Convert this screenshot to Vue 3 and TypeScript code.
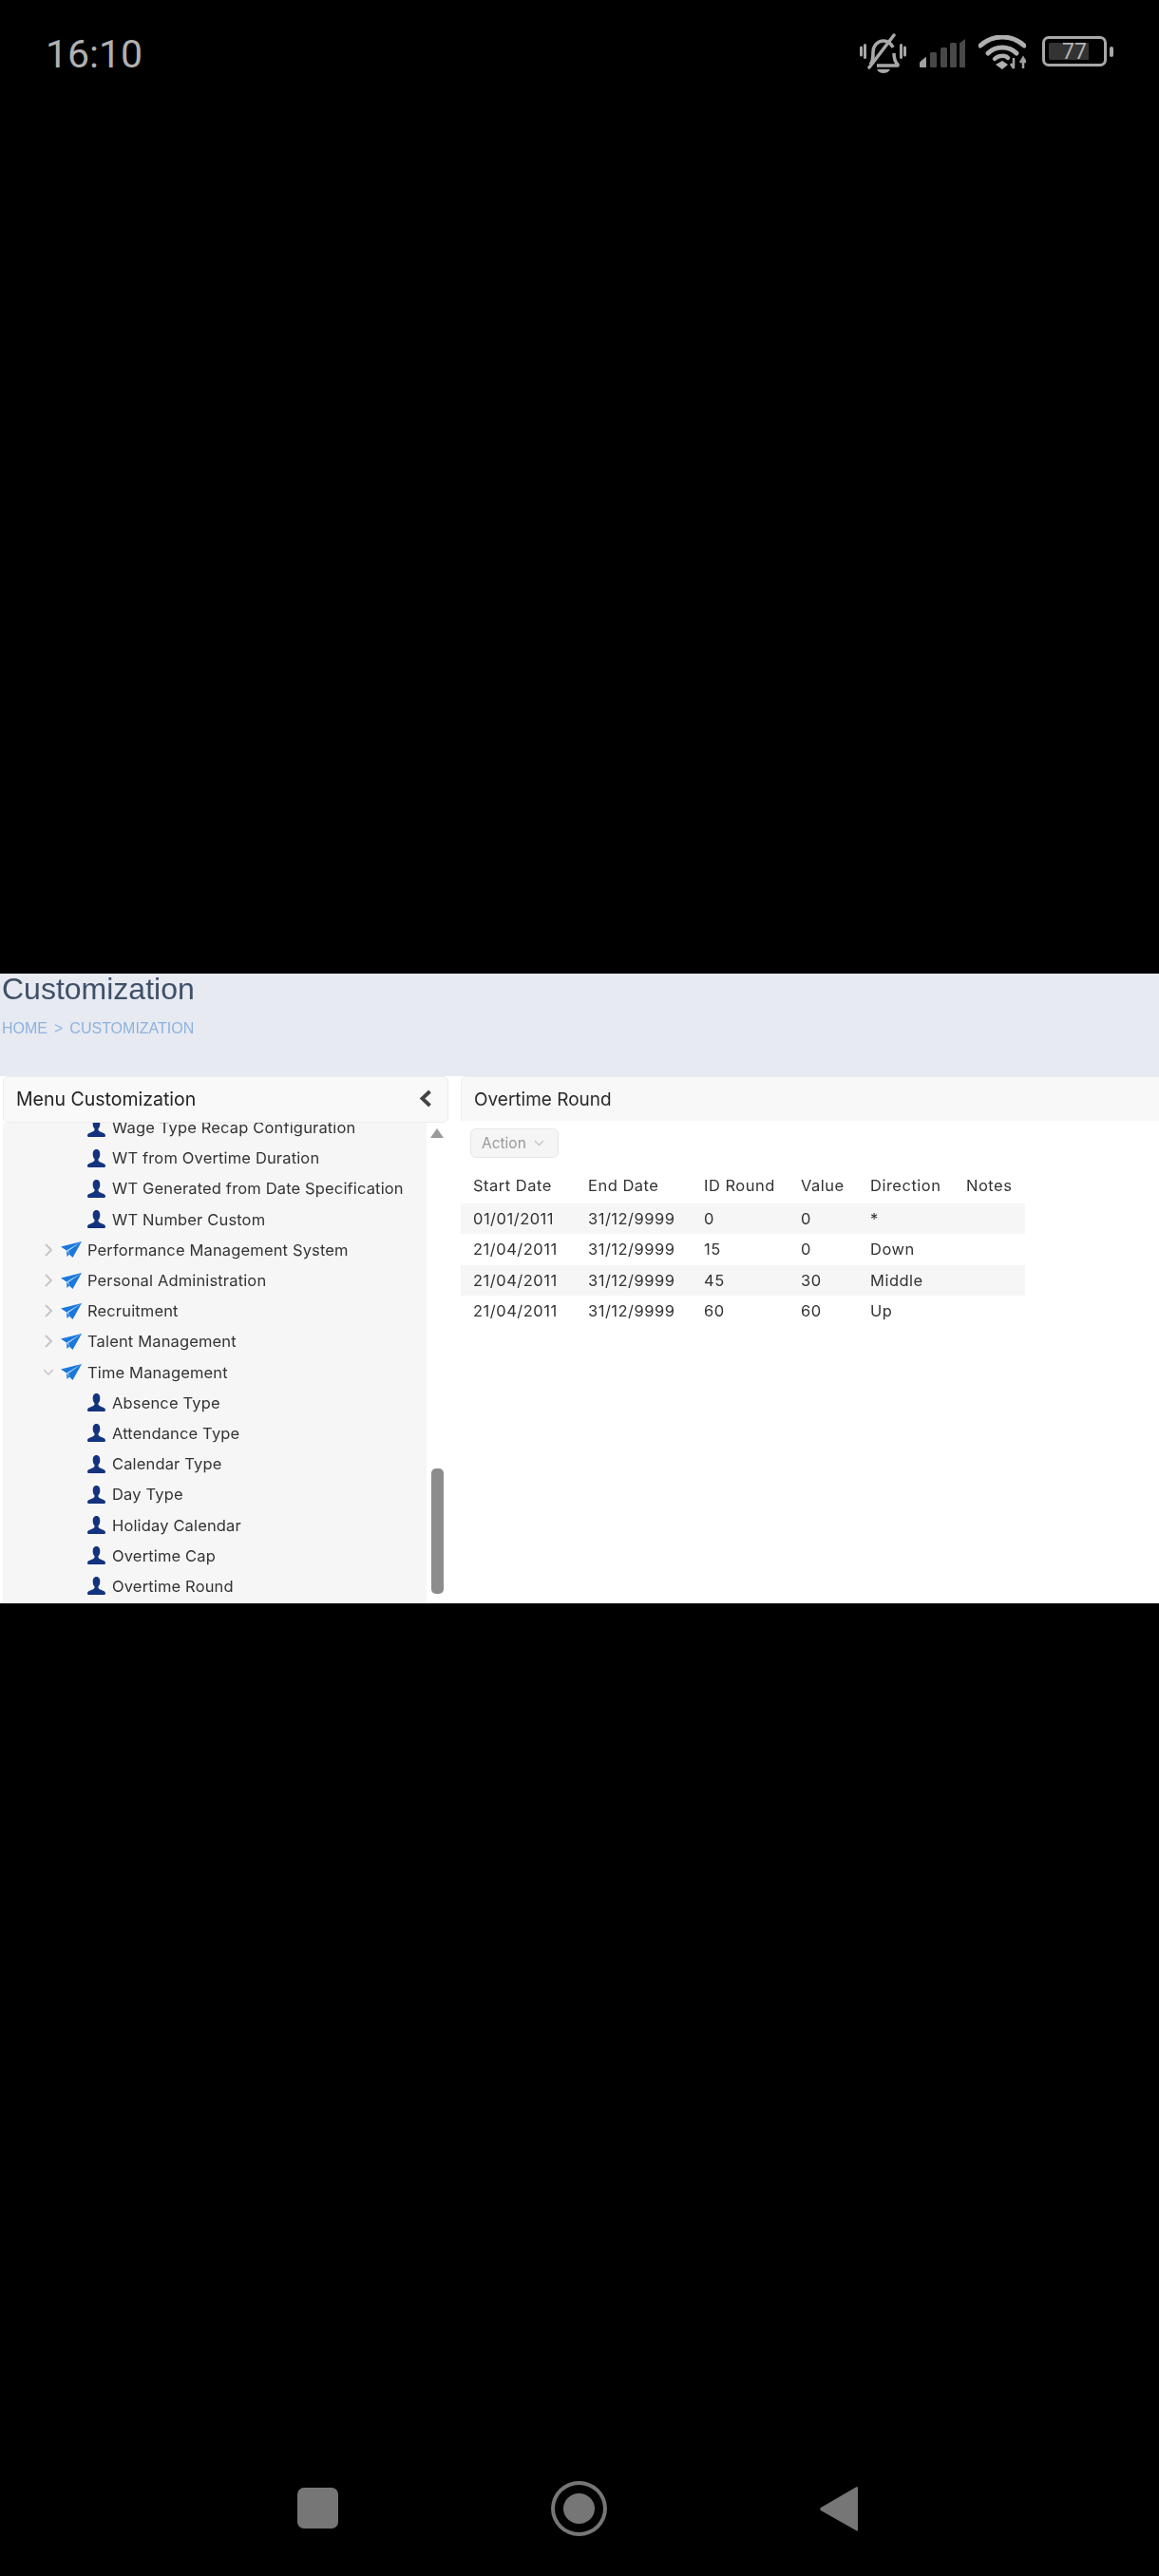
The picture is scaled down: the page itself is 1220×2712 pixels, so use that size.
<template>
  <div class="phone">
    <!-- status bar -->
    <div class="status-bar">
      <span class="time">16:10</span>
      <div class="status-icons">
        <svg class="ic-bell" width="49" height="42" viewBox="0 0 49 42">
          <path d="M1.500 15v8M5.500 12.500v13M47.500 15v8M43.500 12.500v13" stroke="#a8a8a8" stroke-width="3" stroke-linecap="round" fill="none" />
          <path d="M11 33c3-3 3-7 3-13 0-7 5-12 11-12 5 0 8 3 10 7M36 21c0 5 1 9 4 12v1H18" stroke="#a8a8a8" stroke-width="3.500" fill="none" stroke-linejoin="round" />
          <path d="M10 36L36 2" stroke="#a8a8a8" stroke-width="3.500" stroke-linecap="round" />
          <path d="M18 38h14c-2 3-4 4-7 4s-5-1-7-4z" fill="#a8a8a8" />
        </svg>
        <svg class="ic-signal" width="49" height="32" viewBox="0 0 49 32">
          <path d="M0 26c0-1 6-6 7-6v11H1c-1 0-1-1-1-1z" fill="#a0a0a0" />
          <rect x="11" y="15" width="7" height="16" rx="1.500" fill="#484848" />
          <rect x="22" y="10" width="7" height="21" rx="1.500" fill="#484848" />
          <rect x="32" y="5" width="7" height="26" rx="1.500" fill="#484848" />
          <path d="M42 5.500L48 1v29c0 1-1 1-1 1h-4c-1 0-1-1-1-1z" fill="#484848" />
        </svg>
        <svg class="ic-wifi" width="50" height="36" viewBox="0 0 50 36">
          <path d="M2 11C15 -1 35 -1 48 11" stroke="#b0b0b0" stroke-width="5" fill="none" stroke-linecap="round" />
          <path d="M10 19C18 11 32 11 40 19" stroke="#b0b0b0" stroke-width="5" fill="none" stroke-linecap="round" />
          <path d="M17 25C21 21 28 21 31 24" stroke="#b0b0b0" stroke-width="4.500" fill="none" stroke-linecap="round" />
          <path d="M18 31l7-4 6 4-6 5z" fill="#b0b0b0" />
          <path d="M37 24v11M34 30l3 5M47 35V24M44 29l3-5 3 5" stroke="#a0a0a0" stroke-width="2.500" fill="none" />
        </svg>
        <div class="battery">
          <div class="battery-body">
            <div class="battery-fill"><span>77</span></div>
          </div>
          <div class="battery-nub"></div>
        </div>
      </div>
    </div>

    <!-- browser content -->
    <div class="web">
      <div class="page-head">
        <h1>Customization</h1>
        <div class="crumb">HOME<span class="sep">&gt;</span>CUSTOMIZATION</div>
      </div>
      <div class="body">
        <div class="menu">
          <div class="menu-head">
            <span>Menu Customization</span>
            <svg width="14" height="19" viewBox="0 0 14 19"><path d="M11.500 2L3.500 9.500 11.500 17" stroke="#444" stroke-width="3.800" fill="none" /></svg>
          </div>
          <div class="menu-body">
            <div class="tree">
              <div v-for="item in tree" :key="item.label" class="node" :class="item.kind">
                <template v-if="item.kind === 'leaf'">
                  <svg class="user" width="19" height="19" viewBox="0 0 20 20"><path d="M10 0c3 0 4 2.500 4 5.500 0 2.500-1 4.500-2 5.500 0 2 1 2.500 3 3.500s5 1.500 5 4c0 1-.5 1.500-1 1.500H1c-.5 0-1-.5-1-1.500 0-2.500 3-3 5-4s3-1.500 3-3.500c-1-1-2-3-2-5.500C6 2.500 7 0 10 0z" fill="#14337f" /></svg>
                </template>
                <template v-else>
                  <svg class="caret" width="10" height="14" viewBox="0 0 10 14">
                    <path v-if="item.open" d="M0 4l5 5 5-5" stroke="#c4c4c4" stroke-width="1.500" fill="none" />
                    <path v-else d="M2 1l6 6-6 6" stroke="#c4c4c4" stroke-width="1.800" fill="none" />
                  </svg>
                  <svg class="plane" width="22" height="17" viewBox="0 0 22 17"><path d="M0 5.500L22 0 12.500 17 9 13.500 6.500 16 6 9.500z" fill="#1a78dc" /><path d="M22 0L6 9.500 9 13.500 8 10z" fill="#bcdcf7" /></svg>
                </template>
                <span>{{ item.label }}</span>
              </div>
            </div>
          </div>
          <div class="scroll">
            <i class="scroll-up"></i>
            <i class="scroll-thumb"></i>
          </div>
        </div>

        <div class="detail">
          <div class="detail-head">Overtime Round</div>
          <button class="action">Action
            <svg width="11" height="7" viewBox="0 0 11 7"><path d="M1 1l4.500 4.500L10 1" stroke="#c0c0c0" stroke-width="1.200" fill="none" /></svg>
          </button>
          <table>
            <thead>
              <tr><th v-for="c in columns" :key="c">{{ c }}</th></tr>
            </thead>
            <tbody>
              <tr v-for="(r, i) in rows" :key="i">
                <td v-for="(v, j) in r" :key="j">{{ v }}</td>
              </tr>
            </tbody>
          </table>
        </div>
      </div>
    </div>

    <!-- nav bar -->
    <div class="nav">
      <div class="nav-square"></div>
      <div class="nav-home"><div></div></div>
      <svg width="40" height="48" viewBox="0 0 40 48"><path d="M38 1.500c1 -1 2 -.5 2 1V46c0 1.500-1 2-2 1L1 26c-1-1-1-2 0-3z" fill="#767676" /></svg>
    </div>
  </div>
</template>

<script setup lang="ts">
type TreeItem = { label: string; kind: 'leaf' | 'group'; open?: boolean }

const leaf = (label: string): TreeItem => ({ label, kind: 'leaf' })
const group = (label: string, open = false): TreeItem => ({ label, kind: 'group', open })

const tree: TreeItem[] = [
  leaf('Wage Type Recap Configuration'),
  leaf('WT from Overtime Duration'),
  leaf('WT Generated from Date Specification'),
  leaf('WT Number Custom'),
  group('Performance Management System'),
  group('Personal Administration'),
  group('Recruitment'),
  group('Talent Management'),
  group('Time Management', true),
  leaf('Absence Type'),
  leaf('Attendance Type'),
  leaf('Calendar Type'),
  leaf('Day Type'),
  leaf('Holiday Calendar'),
  leaf('Overtime Cap'),
  leaf('Overtime Round'),
]

const columns = ['Start Date', 'End Date', 'ID Round', 'Value', 'Direction', 'Notes']

const rows = [
  ['01/01/2011', '31/12/9999', '0', '0', '*', ''],
  ['21/04/2011', '31/12/9999', '15', '0', 'Down', ''],
  ['21/04/2011', '31/12/9999', '45', '30', 'Middle', ''],
  ['21/04/2011', '31/12/9999', '60', '60', 'Up', ''],
]
</script>

<style>
html,
body {
  background: #000;
}
</style>

<style scoped>
.phone {
  width: 1220px;
  height: 2712px;
  background: #000;
  display: flex;
  flex-direction: column;
  overflow: hidden;
}

.status-bar {
  height: 1025px;
  flex-shrink: 0;
  display: flex;
  justify-content: space-between;
  align-items: flex-start;
  padding: 33px 48px 0 48px;
  box-sizing: border-box;
}

.time {
  font-family: Roboto, sans-serif;
  font-size: 41px;
  line-height: 47px;
  margin-top: 1px;
  color: #b0b0b0;
}

.status-icons {
  display: flex;
  align-items: flex-start;
  margin-top: 2px;
}

.ic-signal {
  margin: 5px 0 0 14px;
}

.ic-wifi {
  margin: 2px 0 0 13px;
}

.battery {
  display: flex;
  align-items: center;
  margin: 3px 0 0 17px;
}

.battery-body {
  width: 68px;
  height: 32px;
  box-sizing: border-box;
  border: 3px solid #a8a8a8;
  border-radius: 7px;
  padding: 4px;
}

.battery-fill {
  width: 42px;
  height: 18px;
  background: #333;
  border-radius: 2px 0 0 2px;
  position: relative;
}

.battery-fill span {
  position: absolute;
  left: 14px;
  top: -2px;
  font-family: Roboto, sans-serif;
  font-size: 23px;
  line-height: 23px;
  color: #b4b4b4;
}

.battery-nub {
  width: 4px;
  height: 11px;
  margin-left: 3px;
  background: #a8a8a8;
  border-radius: 2px;
}

.web {
  height: 663px;
  flex-shrink: 0;
  background: #fff;
  overflow: hidden;
  filter: blur(0.4px);
  font-family: Inter, sans-serif;
  font-size: 16.500px;
  color: #333;
}

.page-head {
  height: 108px;
  box-sizing: border-box;
  background: #e8eaf2;
  padding: 0 2px;
  font-family: "Liberation Sans", sans-serif;
}

.page-head h1 {
  margin: 0;
  font-size: 32px;
  font-weight: 400;
  line-height: 32px;
  color: #3f5068;
}

.crumb {
  margin-top: 16px;
  font-size: 16px;
  line-height: 20px;
  color: #8db2de;
}

.sep {
  margin: 0 7px;
}

.body {
  display: flex;
  height: 555px;
}

.menu {
  width: 472px;
  margin-left: 3px;
  flex-shrink: 0;
  position: relative;
  display: flex;
  flex-wrap: wrap;
  align-content: flex-start;
  height: 555px;
  overflow: hidden;
}

.menu-head {
  width: 469px;
  height: 49px;
  box-sizing: border-box;
  padding: 0 16px 2px 13px;
  display: flex;
  align-items: center;
  justify-content: space-between;
  background: #f9f9f9;
  border: 1px solid #ececec;
  border-radius: 6px;
  font-size: 19.500px;
  color: #222;
  position: relative;
  z-index: 1;
}

.menu-body {
  width: 446px;
  height: 506px;
  background: #f6f6f6;
  overflow: hidden;
}

.tree {
  margin-top: -11px;
  letter-spacing: 0.150px;
}

.node {
  height: 32.200px;
  display: flex;
  align-items: center;
  white-space: nowrap;
}

.node.leaf {
  padding-left: 89px;
}

.node.group {
  padding-left: 43px;
}

.user {
  margin-right: 7px;
}

.caret {
  margin-right: 8px;
}

.plane {
  margin-right: 6px;
}

.scroll {
  width: 23px;
  height: 506px;
  position: relative;
}

.scroll-up {
  position: absolute;
  left: 4px;
  top: 6px;
  border-left: 7.500px solid transparent;
  border-right: 7.500px solid transparent;
  border-bottom: 10px solid #9a9a9a;
}

.scroll-thumb {
  position: absolute;
  left: 5px;
  top: 364px;
  width: 13px;
  height: 132px;
  background: #8c8c8c;
  border-radius: 5px;
}

.detail {
  flex: 1;
  margin-left: 10px;
  min-width: 0;
}

.detail-head {
  height: 47px;
  line-height: 47px;
  padding-left: 13px;
  background: #f8f8f8;
  border-radius: 6px 0 0 0;
  border-top: 1px solid #ececec;
  border-left: 1px solid #ececec;
  box-sizing: border-box;
  font-size: 19px;
  color: #2a2a2a;
}

.action {
  display: flex;
  align-items: center;
  gap: 8px;
  margin: 8px 0 0 10px;
  width: 93px;
  height: 31px;
  padding: 0 0 0 11px;
  box-sizing: border-box;
  background: #f5f5f5;
  border: 1px solid #e6e6e6;
  border-radius: 6px;
  font-family: inherit;
  font-size: 15.500px;
  color: #9a9a9a;
}

table {
  width: 594px;
  margin-top: 10px;
  border-collapse: collapse;
  table-layout: fixed;
  letter-spacing: 0.500px;
}

th,
td {
  padding: 0 0 0 13px;
  box-sizing: border-box;
  text-align: left;
  font-weight: 400;
  white-space: nowrap;
}

th {
  height: 38px;
}

td {
  height: 32.250px;
}

th:nth-child(1) { width: 121px; }
th:nth-child(2) { width: 122px; }
th:nth-child(3) { width: 102px; }
th:nth-child(4) { width: 73px; }
th:nth-child(5) { width: 101px; }

tbody tr:nth-child(odd) {
  background: #f6f6f6;
}

.nav {
  flex: 1;
  display: flex;
  align-items: flex-start;
  padding: 924px 0 0 313px;
  gap: 224px;
}

.nav-square {
  width: 43px;
  height: 43px;
  margin-top: 7px;
  background: #767676;
  border-radius: 7px;
}

.nav-home {
  width: 59px;
  height: 58px;
  box-sizing: border-box;
  border: 4px solid #767676;
  border-radius: 50%;
  padding: 9px;
}

.nav-home div {
  width: 100%;
  height: 100%;
  background: #767676;
  border-radius: 50%;
}

.nav svg {
  margin-top: 5px;
}
</style>
